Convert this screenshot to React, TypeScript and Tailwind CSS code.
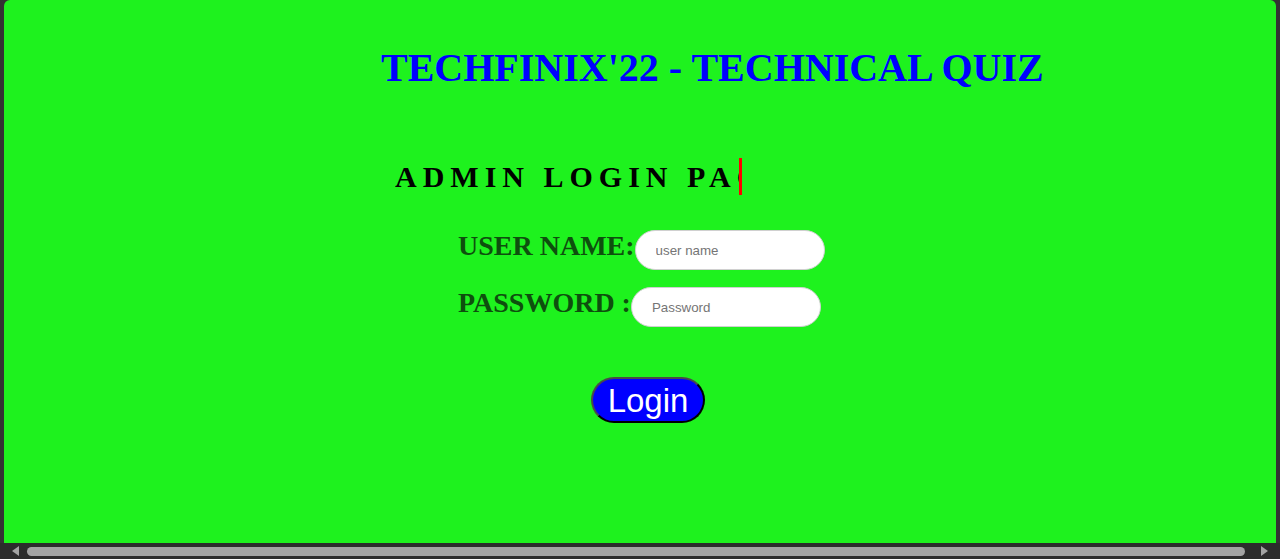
export default function App() {
  return (
    <div className="flex h-[559px] w-[1280px] flex-col overflow-hidden bg-[#333333]">
      <div className="mx-1 flex h-[543px] flex-col items-start rounded-t-[6px] bg-[#1ef21e] font-['Liberation_Serif',serif]">
        <h1 className="ml-[377px] mt-[48px] whitespace-nowrap text-[40px] font-bold leading-[40px] text-[#0000ff]">
          TECHFINIX'22 - TECHNICAL QUIZ
        </h1>

        {/* typing heading, stopped mid-word */}
        <div className="ml-[391px] mt-[70px] w-[347px] overflow-hidden whitespace-nowrap border-r-[3px] border-[#ff0000] text-[30px] font-bold leading-[37px] tracking-[6px] text-black">
          ADMIN LOGIN PAGE
        </div>

        <div className="ml-[454px] mt-[35px] flex flex-col gap-[17px]">
          <div className="flex items-start">
            <label className="whitespace-nowrap text-[28px] font-bold leading-[32px] text-[#0e4f0e]">
              USER NAME:
            </label>
            <input
              placeholder="user name"
              className="h-10 w-[190px] rounded-full border border-[#d0d0d0] bg-white pl-5 font-['Liberation_Sans',Arial,sans-serif] text-[13.33px] text-black outline-none placeholder:text-[#757575]"
            />
          </div>
          <div className="flex items-start">
            <label className="whitespace-nowrap text-[28px] font-bold leading-[32px] text-[#0e4f0e]">
              PASSWORD :
            </label>
            <input
              type="password"
              placeholder="Password"
              className="h-10 w-[190px] rounded-full border border-[#d0d0d0] bg-white pl-5 font-['Liberation_Sans',Arial,sans-serif] text-[13.33px] text-black outline-none placeholder:text-[#757575]"
            />
          </div>
        </div>

        <button className="ml-[587px] mt-[50px] h-[46px] w-[114px] rounded-full border-2 border-[#4a4a4a] border-b-black border-r-black bg-[#0000ff] font-['Liberation_Sans',Arial,sans-serif] text-[33px] leading-none text-white">
          Login
        </button>
      </div>

      {/* horizontal scrollbar */}
      <div className="flex h-4 items-center bg-[#2c2c2c] px-[11px]">
        <svg width="9" height="10" viewBox="0 0 9 10" className="shrink-0">
          <path d="M8 0 L8 10 L1 5 Z" fill="#a3a3a3" />
        </svg>
        <div className="ml-[7px] h-[9px] flex-1 rounded-full bg-[#a3a3a3]" />
        <svg width="9" height="10" viewBox="0 0 9 10" className="ml-[15px] shrink-0">
          <path d="M1 0 L1 10 L8 5 Z" fill="#a3a3a3" />
        </svg>
      </div>
    </div>
  );
}
